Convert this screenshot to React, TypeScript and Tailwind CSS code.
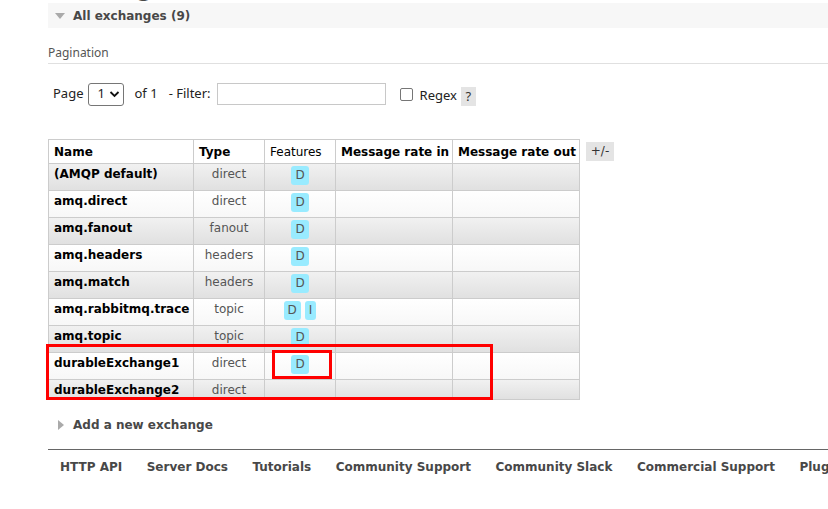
const rows: { name: string; type: string; features: string[] }[] = [
  { name: "(AMQP default)", type: "direct", features: ["D"] },
  { name: "amq.direct", type: "direct", features: ["D"] },
  { name: "amq.fanout", type: "fanout", features: ["D"] },
  { name: "amq.headers", type: "headers", features: ["D"] },
  { name: "amq.match", type: "headers", features: ["D"] },
  { name: "amq.rabbitmq.trace", type: "topic", features: ["D", "I"] },
  { name: "amq.topic", type: "topic", features: ["D"] },
  { name: "durableExchange1", type: "direct", features: ["D"] },
  { name: "durableExchange2", type: "direct", features: [] },
];

const footerLinks = [
  "HTTP API",
  "Server Docs",
  "Tutorials",
  "Community Support",
  "Community Slack",
  "Commercial Support",
  "Plugins",
];

function Badge({ label }: { label: string }) {
  return (
    <span className="inline-block h-[19px] leading-[19px] px-1 rounded-[3px] bg-[#99ebff] text-[#555]">
      {label}
    </span>
  );
}

function ExchangesTable() {
  return (
    <div className="flex items-start">
      <div className="relative">
        <table className="table-fixed border-collapse w-[531px] text-[12px]">
          <colgroup>
            <col className="w-[145px]" />
            <col className="w-[71px]" />
            <col className="w-[71px]" />
            <col className="w-[117px]" />
            <col className="w-[127px]" />
          </colgroup>
          <thead>
            <tr className="h-[24px] bg-white text-black whitespace-nowrap">
              <th className="border border-[#ccc] text-left font-bold px-[5px]">Name</th>
              <th className="border border-[#ccc] text-left font-bold px-[5px]">Type</th>
              <th className="border border-[#ccc] text-left font-normal px-[5px]">Features</th>
              <th className="border border-[#ccc] text-left font-bold px-[5px]">Message rate in</th>
              <th className="border border-[#ccc] text-left font-bold px-[5px]">Message rate out</th>
            </tr>
          </thead>
          <tbody>
            {rows.map((r, i) => (
              <tr
                key={r.name}
                className={
                  (r.features.length ? "h-[27px] " : "h-[20px] ") +
                  (i % 2 === 0
                    ? "bg-gradient-to-b from-[#f1f1f1] to-[#e0e0e0]"
                    : "bg-gradient-to-b from-white to-[#f7f7f7]")
                }
              >
                <td className="border border-[#ccc] align-top px-[5px] pt-[3px] leading-[15px] font-bold text-black whitespace-nowrap">
                  {r.name}
                </td>
                <td className="border border-[#ccc] align-top text-center pt-[3px] leading-[15px] text-[#555]">
                  {r.type}
                </td>
                <td className="border border-[#ccc] align-top text-center pt-[2px] leading-[19px]">
                  <div className="flex justify-center gap-[4px]">
                    {r.features.map((f) => (
                      <Badge key={f} label={f} />
                    ))}
                  </div>
                </td>
                <td className="border border-[#ccc]" />
                <td className="border border-[#ccc]" />
              </tr>
            ))}
          </tbody>
        </table>
        <div className="absolute left-[-2px] top-[205px] w-[447px] h-[56px] border-[3px] border-[#ff0000]" />
        <div className="absolute left-[224px] top-[211px] w-[60px] h-[29px] border-[3px] border-[#ff0000]" />
      </div>
      <div className="ml-[6px] mt-[3px] h-[19px] w-[28px] bg-[#e4e4e4] text-[12px] text-[#333] leading-[19px] text-center">
        +/-
      </div>
    </div>
  );
}

export default function App() {
  return (
    <div className="w-[828px] h-[509px] overflow-hidden bg-white font-['DejaVu_Sans',sans-serif]">
      <div className="flex flex-col pl-[48px]">
        <h1 className="-mt-[21px] h-[22px] leading-[22px] text-[22px] font-bold text-[#484848]">
          Exchanges
        </h1>
        <div className="mt-[2px] h-[25px] bg-[#f7f7f7] flex items-center">
          <span className="ml-[7px] w-0 h-0 border-l-[5px] border-r-[5px] border-t-[6px] border-l-transparent border-r-transparent border-t-[#aaa]" />
          <span className="ml-[8px] text-[12px] font-bold text-[#484848]">All exchanges (9)</span>
        </div>

        <div className="mt-[17px] h-[19px] border-b border-[#e0e0e0] font-['Noto_Sans',sans-serif] text-[12px] text-[#555] leading-[16px]">
          Pagination
        </div>

        <div className="mt-[18px] ml-[5px] h-[24px] flex items-center font-['Noto_Sans',sans-serif] text-[13px] text-[#222]">
          <span>Page</span>
          <div className="ml-[4px] w-[36px] h-[23px] border border-[#767676] rounded-[3px] flex items-center pl-[9px] gap-[3px]">
            <span>1</span>
            <svg width="11" height="8" viewBox="0 0 11 8" className="ml-[1px]">
              <path d="M1.5 2 L5.5 6 L9.5 2" fill="none" stroke="#111" strokeWidth="1.8" />
            </svg>
          </div>
          <span className="ml-[11px]">of 1</span>
          <span className="ml-[11px]">- Filter:</span>
          <div className="ml-[6px] w-[169px] h-[22px] border border-[#c8c8c8] bg-white" />
          <div className="ml-[14px] w-[13px] h-[13px] border border-[#767676] rounded-[2px] bg-white" />
          <span className="ml-[7px] mt-[4px]">Regex</span>
          <span className="ml-[4px] mt-[4px] w-[15px] h-[19px] bg-[#e4e4e4] text-center leading-[19px] text-[#333]">?</span>
        </div>

        <div className="mt-[33px]">
          <ExchangesTable />
        </div>

        <div className="mt-[18px] h-[14px] flex items-center">
          <span className="ml-[10px] w-0 h-0 border-t-[5px] border-b-[5px] border-l-[6px] border-t-transparent border-b-transparent border-l-[#aaa]" />
          <span className="ml-[9px] text-[12px] font-bold text-[#484848]">Add a new exchange</span>
        </div>

        <div className="mt-[17px] border-t border-[#666]" />
        <div className="mt-[8px] pl-[12px] flex gap-[24.5px] whitespace-nowrap text-[12px] font-bold text-[#484848]">
          {footerLinks.map((l) => (
            <span key={l}>{l}</span>
          ))}
        </div>
      </div>
    </div>
  );
}
